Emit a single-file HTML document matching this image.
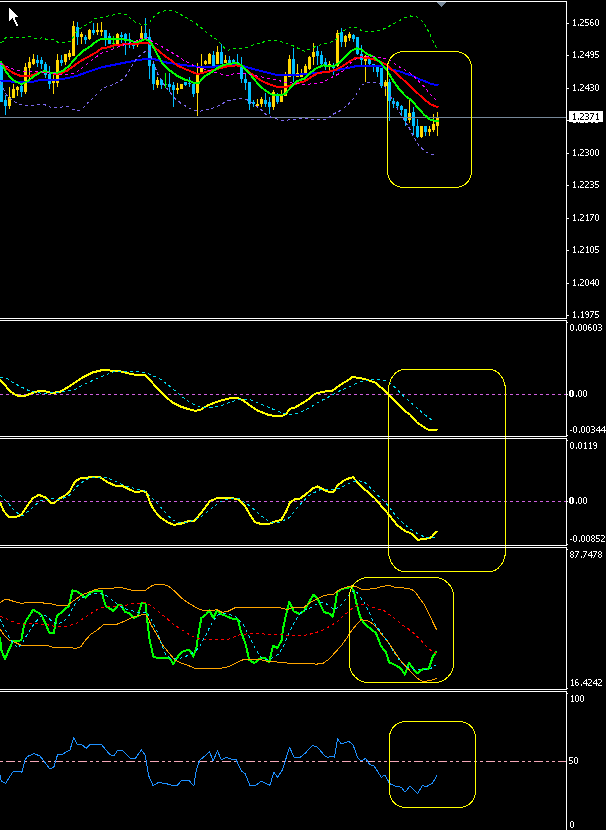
<!DOCTYPE html>
<html><head><meta charset="utf-8"><style>
html,body{margin:0;padding:0;background:#000;width:608px;height:830px;overflow:hidden}
svg{display:block}
path,line,polygon{shape-rendering:crispEdges}
text{font-family:"Liberation Sans",sans-serif;font-size:10px}
</style></head><body>
<svg width="608" height="830" viewBox="0 0 608 830">
<path d="M0 394.5H566" stroke="#d060e0" stroke-dasharray="3 3"/>
<path d="M0 501.5H566" stroke="#d060e0" stroke-dasharray="3 3"/>
<path d="M-18 761.5H566" stroke="#f5a8b8" stroke-dasharray="9 3 3 3 3 3"/>
<path fill="#ffd700" d="M8 97h3v9h-3zM9 87h1v22h-1zM12 89h3v9h-3zM13 84h1v14h-1zM16 87h3v3h-3zM17 86h1v10h-1zM24 67h3v25h-3zM25 63h1v31h-1zM28 62h3v6h-3zM29 57h1v22h-1zM32 59h3v5h-3zM33 54h1v11h-1zM52 80h3v3h-3zM53 75h1v19h-1zM56 60h3v23h-3zM57 54h1v33h-1zM64 54h3v8h-3zM65 54h1v11h-1zM68 53h3v4h-3zM69 50h1v10h-1zM72 26h3v30h-3zM73 21h1v35h-1zM80 34h3v3h-3zM81 32h1v12h-1zM88 30h3v9h-3zM89 29h1v11h-1zM96 30h3v2h-3zM97 23h1v12h-1zM100 30h3v2h-3zM101 22h1v14h-1zM116 34h3v11h-3zM117 33h1v13h-1zM136 41h3v2h-3zM137 40h1v7h-1zM140 33h3v6h-3zM141 26h1v13h-1zM156 80h3v5h-3zM157 77h1v11h-1zM176 88h3v2h-3zM177 83h1v11h-1zM180 84h3v5h-3zM181 84h1v5h-1zM196 74h3v19h-3zM197 63h1v53h-1zM200 68h3v4h-3zM201 54h1v20h-1zM204 61h3v3h-3zM205 60h1v5h-1zM208 54h3v10h-3zM209 53h1v11h-1zM216 52h3v12h-3zM217 46h1v18h-1zM224 60h3v3h-3zM225 55h1v8h-1zM256 104h3v2h-3zM257 99h1v8h-1zM260 99h3v5h-3zM261 97h1v10h-1zM272 92h3v15h-3zM273 90h1v20h-1zM280 94h3v8h-3zM281 90h1v12h-1zM284 76h3v20h-3zM285 72h1v24h-1zM288 59h3v18h-3zM289 55h1v22h-1zM296 73h3v4h-3zM297 64h1v13h-1zM300 73h3v4h-3zM301 69h1v8h-1zM304 66h3v7h-3zM305 64h1v9h-1zM308 57h3v12h-3zM309 56h1v14h-1zM312 52h3v5h-3zM313 43h1v22h-1zM328 64h3v2h-3zM329 61h1v10h-1zM336 33h3v33h-3zM337 30h1v37h-1zM344 36h3v6h-3zM345 35h1v12h-1zM348 34h3v4h-3zM349 32h1v9h-1zM364 56h3v5h-3zM365 55h1v27h-1zM384 82h3v4h-3zM385 80h1v16h-1zM408 113h3v7h-3zM409 100h1v23h-1zM420 126h3v11h-3zM421 126h1v12h-1zM428 129h3v3h-3zM429 126h1v10h-1zM432 124h3v6h-3zM433 114h1v18h-1zM436 117h3v9h-3zM437 112h1v24h-1z"/>
<path fill="#00bfff" d="M0 64h3v38h-3zM1 64h1v38h-1zM4 100h3v6h-3zM5 95h1v20h-1zM20 86h3v6h-3zM21 84h1v13h-1zM36 60h3v3h-3zM37 55h1v12h-1zM40 60h3v4h-3zM41 57h1v12h-1zM44 64h3v11h-3zM45 62h1v16h-1zM48 74h3v10h-3zM49 66h1v23h-1zM60 60h3v3h-3zM61 55h1v11h-1zM76 27h3v10h-3zM77 22h1v23h-1zM84 37h3v3h-3zM85 35h1v9h-1zM92 30h3v3h-3zM93 23h1v12h-1zM104 30h3v8h-3zM105 30h1v16h-1zM108 36h3v8h-3zM109 33h1v11h-1zM120 35h3v2h-3zM121 32h1v11h-1zM124 34h3v5h-3zM125 33h1v22h-1zM128 39h3v2h-3zM129 33h1v15h-1zM132 44h3v2h-3zM133 42h1v7h-1zM144 33h3v6h-3zM145 18h1v21h-1zM148 37h3v29h-3zM149 29h1v50h-1zM152 64h3v20h-3zM153 62h1v28h-1zM160 80h3v5h-3zM161 79h1v10h-1zM168 84h3v3h-3zM169 73h1v19h-1zM172 85h3v5h-3zM173 82h1v25h-1zM184 82h3v3h-3zM185 82h1v4h-1zM188 83h3v1h-3zM189 77h1v10h-1zM192 84h3v10h-3zM193 84h1v13h-1zM212 55h3v11h-3zM213 51h1v15h-1zM220 52h3v12h-3zM221 44h1v20h-1zM228 60h3v3h-3zM229 56h1v7h-1zM232 60h3v2h-3zM233 59h1v4h-1zM236 62h3v1h-3zM237 54h1v9h-1zM240 65h3v14h-3zM241 57h1v26h-1zM244 79h3v4h-3zM245 74h1v16h-1zM248 82h3v22h-3zM249 82h1v28h-1zM252 102h3v2h-3zM253 100h1v7h-1zM264 100h3v4h-3zM265 93h1v14h-1zM268 102h3v5h-3zM269 97h1v17h-1zM276 94h3v8h-3zM277 93h1v11h-1zM292 59h3v15h-3zM293 48h1v34h-1zM316 51h3v5h-3zM317 46h1v19h-1zM320 55h3v9h-3zM321 51h1v14h-1zM324 62h3v4h-3zM325 58h1v12h-1zM332 66h3v2h-3zM333 63h1v12h-1zM340 32h3v10h-3zM341 28h1v19h-1zM352 35h3v4h-3zM353 34h1v8h-1zM356 37h3v17h-3zM357 37h1v18h-1zM360 54h3v6h-3zM361 45h1v20h-1zM368 58h3v6h-3zM369 58h1v7h-1zM372 64h3v3h-3zM373 64h1v8h-1zM376 67h3v5h-3zM377 66h1v11h-1zM380 68h3v18h-3zM381 68h1v20h-1zM388 82h3v19h-3zM389 79h1v42h-1zM392 101h3v3h-3zM393 98h1v10h-1zM396 102h3v4h-3zM397 101h1v7h-1zM400 106h3v4h-3zM401 105h1v11h-1zM404 109h3v12h-3zM405 109h1v17h-1zM412 112h3v14h-3zM413 107h1v28h-1zM416 126h3v11h-3zM417 119h1v19h-1zM424 126h3v6h-3zM425 126h1v10h-1z"/>
<path fill="#00ff00" d="M112 43h3v1h-3zM113 36h1v13h-1zM164 84h3v1h-3zM165 73h1v15h-1z"/>
<rect x="0" y="117" width="566" height="1" fill="#778899"/>
<path d="M0.5 80.5 L10.5 81.5 L20.5 82.3 L30.5 82.3 L40.5 80.0 L53.0 79.5 L59.3 79.5 L68.0 77.9 L76.5 76.0 L89.0 71.5 L101.5 67.3 L114.0 64.8 L126.5 62.3 L139.0 60.0 L147.8 58.5 L152.5 59.1 L157.5 59.8 L165.0 62.3 L177.5 64.1 L190.0 66.0 L202.5 67.0 L215.0 66.5 L220.0 66.0 L228.5 64.5 L241.0 65.4 L253.5 69.1 L266.0 72.3 L278.5 75.4 L291.0 75.4 L304.5 74.1 L317.0 72.9 L329.5 71.5 L342.0 69.1 L354.5 66.5 L367.0 65.8 L380.5 66.0 L386.8 68.6 L393.0 69.9 L399.3 71.1 L405.5 73.6 L411.8 75.5 L418.0 78.6 L424.3 81.1 L430.5 83.6 L438.5 85.5" fill="none" stroke="#0000ff" stroke-width="2" stroke-linejoin="round"/>
<path d="M0.5 62.9 L5.5 67.9 L13.0 72.9 L20.5 76.0 L30.5 76.0 L38.0 72.9 L44.3 71.5 L53.0 73.5 L60.5 73.5 L66.5 71.0 L73.0 66.5 L76.5 63.8 L82.8 59.8 L89.0 56.5 L95.3 52.9 L101.5 48.5 L107.8 47.3 L114.0 45.4 L126.5 44.1 L139.0 43.5 L147.8 42.9 L151.5 44.8 L158.8 51.0 L165.0 56.0 L171.3 60.4 L177.5 65.4 L183.8 68.5 L190.0 71.0 L197.5 74.1 L202.5 72.9 L208.8 71.0 L215.0 69.8 L221.3 67.9 L228.5 66.0 L236.0 65.4 L242.3 66.5 L251.0 73.5 L259.8 79.8 L268.5 84.1 L276.0 86.5 L284.8 87.3 L291.0 85.4 L298.5 82.9 L304.5 81.3 L310.8 77.3 L317.0 73.5 L323.3 72.3 L329.5 71.5 L335.8 69.8 L342.0 66.5 L348.3 62.3 L354.5 58.5 L360.8 57.3 L367.0 57.9 L373.3 59.1 L380.5 61.7 L386.8 64.9 L393.0 70.5 L399.3 76.1 L405.5 81.8 L411.8 87.4 L418.0 93.6 L424.3 99.3 L430.5 104.3 L438.5 107.5" fill="none" stroke="#ff0000" stroke-width="2" stroke-linejoin="round"/>
<path d="M0.5 61.5 L5.5 71.0 L10.5 77.9 L15.5 81.5 L21.5 84.1 L28.0 81.0 L34.3 76.0 L40.5 72.3 L44.3 71.0 L50.5 72.9 L56.5 72.9 L63.0 71.0 L69.3 65.5 L76.5 57.0 L82.8 51.0 L89.0 47.3 L95.3 42.3 L101.5 38.5 L114.0 38.5 L126.5 39.8 L132.5 41.5 L139.0 41.5 L145.3 39.1 L150.3 41.5 L152.5 45.5 L157.5 54.8 L162.5 63.5 L168.8 69.8 L177.5 76.0 L185.0 79.8 L190.0 81.0 L195.0 83.5 L198.8 82.9 L205.0 76.0 L211.3 72.3 L217.5 67.9 L223.8 64.8 L228.5 64.1 L234.8 62.9 L241.0 64.8 L247.3 71.0 L253.5 78.5 L259.8 86.0 L266.0 91.0 L272.3 94.8 L278.5 95.4 L284.8 94.1 L291.0 87.3 L297.3 81.0 L304.5 78.5 L310.8 72.3 L317.0 67.9 L323.3 65.4 L329.5 66.0 L334.5 66.0 L339.5 62.3 L345.8 56.0 L352.0 50.4 L357.0 48.3 L362.0 49.8 L367.0 54.1 L373.3 56.6 L380.5 62.5 L386.8 69.9 L393.0 80.5 L399.3 89.3 L405.5 96.1 L411.8 100.5 L418.0 108.0 L424.3 114.9 L430.5 119.9 L436.8 121.1 L438.5 121.1" fill="none" stroke="#00ff00" stroke-width="2" stroke-linejoin="round"/>
<path d="M0.5 42.5 L3.0 41.5 L5.5 37.9 L25.5 37.9 L29.3 36.5 L33.0 37.9 L38.0 39.1 L43.0 37.3 L45.5 39.1 L53.0 39.5 L58.0 42.3 L63.0 42.3 L70.5 41.5 L74.3 35.5 L76.5 31.5 L82.8 26.5 L89.0 23.5 L95.3 18.5 L101.5 17.3 L107.8 16.0 L114.0 14.8 L120.3 13.3 L126.5 14.8 L131.5 19.1 L136.5 22.9 L142.8 24.8 L149.0 23.5 L152.5 17.9 L158.8 12.9 L165.0 10.8 L171.3 10.8 L177.5 12.3 L183.8 16.5 L190.0 19.8 L195.0 22.9 L201.3 27.9 L207.5 33.5 L213.8 37.3 L218.8 41.5 L223.8 47.3 L227.5 50.5 L234.8 48.5 L241.0 48.5 L247.3 47.3 L253.5 44.8 L259.8 43.5 L266.0 41.0 L272.3 40.8 L278.5 41.0 L284.8 42.9 L291.0 44.8 L297.3 47.9 L302.3 49.8 L304.5 51.5 L310.8 48.5 L317.0 46.0 L323.3 44.1 L329.5 42.9 L335.8 39.8 L339.5 33.5 L344.5 30.4 L350.8 27.3 L357.0 27.3 L362.0 31.0 L369.5 31.0 L373.8 31.8 L381.0 30.0 L386.9 27.6 L392.9 24.1 L398.8 21.0 L404.7 17.7 L410.6 16.0 L416.5 16.5 L419.5 18.5 L423.0 22.0 L426.5 27.5 L429.5 33.5 L432.5 40.0 L435.5 46.0 L437.0 48.5" fill="none" stroke="#00f000" stroke-width="1" stroke-linejoin="round" stroke-dasharray="3 3"/>
<path d="M0.5 82.5 L4.3 91.0 L6.8 95.5 L13.0 101.0 L19.3 104.5 L25.5 105.5 L33.0 105.5 L38.0 104.1 L44.3 104.5 L50.5 107.3 L59.3 107.3 L68.0 106.5 L73.0 109.5 L79.0 111.0 L84.0 107.3 L89.0 101.5 L95.3 96.0 L100.3 90.5 L106.5 86.5 L112.8 84.8 L117.8 82.3 L124.0 78.5 L127.8 72.9 L131.5 66.5 L135.3 60.4 L140.3 55.4 L145.9 51.0 L148.5 50.5 L150.5 54.5 L154.5 65.5 L157.5 73.5 L162.5 82.3 L168.8 91.0 L175.0 98.5 L181.3 103.5 L187.5 107.3 L193.8 110.4 L198.8 111.5 L205.0 109.8 L211.3 108.5 L217.5 106.5 L222.5 103.5 L228.5 100.4 L234.8 99.8 L241.0 98.5 L247.3 99.8 L253.5 104.1 L259.8 108.5 L264.8 113.5 L271.0 117.3 L277.3 119.1 L282.3 120.4 L288.5 120.0 L294.8 119.1 L301.0 118.5 L304.5 117.9 L314.5 119.8 L325.8 119.1 L333.3 114.1 L342.0 109.8 L348.3 104.1 L354.5 97.3 L358.3 91.0 L362.0 84.8 L367.0 82.5 L373.3 82.5 L378.3 82.3 L384.5 86.5 L390.5 96.5 L396.8 108.0 L403.0 118.0 L409.3 128.0 L414.3 138.0 L419.0 145.5 L424.8 151.3 L430.5 154.5 L437.3 155.1" fill="none" stroke="#7b68ee" stroke-width="1" stroke-linejoin="round" stroke-dasharray="3 3"/>
<path d="M0.5 63.5 L6.8 66.5 L13.0 69.1 L21.5 71.5 L38.0 71.5 L44.3 72.3 L53.0 73.5 L63.0 74.5 L70.5 74.1 L76.5 72.3 L82.8 67.3 L89.0 62.3 L95.3 57.9 L100.3 53.5 L107.8 51.0 L114.0 48.5 L124.0 44.8 L132.8 42.3 L141.5 38.5 L147.8 37.9 L151.5 41.0 L158.8 44.8 L165.0 48.5 L171.3 52.3 L177.5 56.0 L183.8 60.4 L190.0 63.5 L196.3 67.3 L202.5 68.5 L208.8 70.4 L215.0 72.3 L220.0 73.5 L226.3 76.0 L234.8 73.5 L241.0 73.5 L247.3 74.1 L253.5 75.4 L259.8 76.5 L266.0 77.9 L272.3 79.1 L278.5 80.4 L284.8 82.3 L291.0 82.9 L297.3 83.5 L303.5 84.8 L314.5 83.5 L323.3 82.3 L332.0 77.3 L339.5 73.5 L344.5 69.8 L350.8 62.9 L357.0 58.5 L363.3 56.6 L369.5 56.6 L377.0 56.6 L380.5 58.0 L388.0 58.6 L393.0 63.0 L399.3 66.8 L405.5 70.5 L411.8 74.3 L418.0 80.5 L424.3 86.8 L429.3 93.0 L434.3 98.6 L437.5 101.5" fill="none" stroke="#ff00ff" stroke-width="1" stroke-linejoin="round" stroke-dasharray="3 3"/>
<path d="M0.0 380.0 L5.0 385.0 L10.0 391.3 L15.0 394.5 L20.0 396.5 L25.0 396.0 L30.0 393.8 L37.5 391.3 L45.0 391.3 L52.5 393.0 L60.0 391.8 L67.5 387.5 L75.0 382.5 L82.5 377.5 L92.5 372.5 L102.5 370.0 L110.0 370.5 L120.0 371.3 L130.0 373.8 L137.5 375.0 L145.0 375.0 L150.0 380.0 L157.5 388.8 L165.0 396.3 L172.5 402.5 L180.0 406.3 L187.5 408.8 L195.0 410.8 L200.0 410.0 L207.5 405.5 L215.0 402.5 L222.5 400.0 L230.0 398.3 L236.3 397.5 L242.5 400.0 L250.0 405.5 L257.5 410.5 L267.5 414.5 L275.0 416.3 L281.3 416.3 L286.3 413.8 L290.0 408.8 L295.0 407.5 L300.0 404.5 L307.5 400.0 L315.0 393.8 L322.5 391.8 L332.5 390.5 L340.0 385.0 L347.5 380.5 L352.5 377.0 L360.0 378.0 L367.5 380.0 L375.0 382.5 L382.5 388.8 L390.0 396.3 L397.5 403.8 L405.0 411.3 L410.0 414.5 L417.5 423.0 L427.5 429.5 L437.5 430.0" fill="none" stroke="#ffff00" stroke-width="2" stroke-linejoin="round"/>
<path d="M0.0 377.0 L7.5 378.8 L12.5 382.5 L20.0 386.3 L30.0 391.3 L40.0 393.0 L50.0 393.0 L65.0 391.3 L75.0 389.5 L85.0 383.8 L95.0 379.5 L105.0 375.0 L115.0 371.3 L130.0 371.3 L145.0 372.5 L150.0 374.5 L160.0 378.8 L170.0 386.3 L180.0 395.0 L190.0 402.5 L200.0 407.0 L210.0 407.5 L220.0 406.3 L230.0 402.0 L240.0 399.5 L250.0 399.5 L260.0 403.8 L270.0 408.0 L280.0 412.0 L287.5 414.5 L295.0 413.8 L300.0 412.5 L310.0 407.5 L320.0 401.3 L330.0 396.3 L340.0 390.8 L350.0 386.3 L360.0 382.0 L370.0 379.5 L380.0 379.5 L387.5 381.3 L395.0 387.5 L405.0 397.5 L415.0 406.3 L425.0 415.0 L433.8 421.3" fill="none" stroke="#00dcf0" stroke-width="1" stroke-linejoin="round" stroke-dasharray="3 3"/>
<path d="M0.0 502.3 L3.8 511.0 L8.8 517.3 L15.0 517.3 L21.3 514.8 L26.3 507.3 L32.5 498.5 L38.8 494.8 L45.0 497.3 L50.0 502.3 L53.8 503.5 L58.8 499.0 L65.0 495.5 L70.0 491.0 L75.0 481.5 L80.0 478.5 L90.0 477.3 L100.0 477.3 L107.5 482.3 L115.0 485.5 L122.5 486.0 L130.0 489.8 L136.3 492.3 L142.5 491.0 L146.3 492.3 L150.0 502.3 L153.8 509.8 L160.0 517.3 L167.5 522.3 L173.8 524.8 L180.0 524.0 L187.5 521.5 L195.0 520.5 L202.5 511.0 L210.0 501.0 L217.5 498.0 L225.0 497.8 L232.5 498.0 L238.8 499.8 L245.0 506.0 L250.0 514.8 L255.0 522.3 L261.3 524.0 L267.5 524.5 L275.0 521.5 L281.3 519.8 L286.3 511.0 L290.0 502.3 L295.0 499.3 L300.0 498.5 L306.3 494.0 L312.5 488.5 L317.5 486.5 L322.5 489.0 L327.5 491.5 L333.8 491.8 L337.5 485.5 L343.8 480.5 L350.0 477.8 L353.0 477.3 L358.8 483.5 L362.5 488.0 L367.5 491.5 L375.0 498.5 L382.5 507.3 L390.0 516.0 L397.5 525.5 L405.0 531.0 L411.3 533.5 L417.5 539.8 L425.0 539.0 L431.3 537.3 L437.0 531.0" fill="none" stroke="#ffff00" stroke-width="2" stroke-linejoin="round"/>
<path d="M0.0 494.8 L7.5 502.3 L15.0 511.5 L22.5 516.0 L30.0 509.8 L40.0 501.0 L50.0 498.5 L60.0 499.8 L70.0 494.8 L77.5 486.0 L85.0 479.8 L95.0 477.3 L105.0 477.3 L115.0 481.0 L125.0 486.0 L135.0 488.5 L145.0 491.0 L150.0 496.0 L157.5 503.5 L165.0 512.3 L172.5 519.8 L180.0 523.0 L190.0 521.5 L200.0 517.3 L210.0 509.8 L220.0 501.5 L230.0 498.5 L240.0 499.0 L250.0 506.0 L260.0 514.8 L270.0 522.3 L280.0 522.3 L290.0 517.3 L297.5 507.3 L302.0 502.3 L310.0 494.8 L320.0 489.8 L330.0 489.8 L340.0 488.0 L350.0 483.0 L357.5 480.3 L365.0 482.3 L372.5 489.8 L380.0 497.3 L387.5 504.8 L395.0 514.8 L405.0 524.8 L415.0 532.3 L425.0 537.3 L436.3 537.3" fill="none" stroke="#00dcf0" stroke-width="1" stroke-linejoin="round" stroke-dasharray="3 3"/>
<path d="M0.0 637.3 L1.3 649.8 L5.0 659.0 L8.8 649.8 L13.1 641.0 L21.3 640.4 L23.8 626.0 L26.3 620.4 L33.1 609.8 L37.5 612.3 L41.3 614.8 L45.0 622.3 L49.4 632.9 L53.8 632.9 L56.9 616.0 L60.0 613.5 L68.8 606.0 L72.5 590.4 L76.0 591.0 L81.0 594.1 L85.4 597.9 L89.8 592.9 L94.8 590.8 L101.6 590.8 L104.1 601.0 L106.0 606.0 L113.5 611.0 L118.5 604.8 L121.0 604.8 L124.8 611.6 L129.8 613.5 L133.5 617.9 L137.9 616.0 L141.6 602.9 L145.4 602.9 L147.9 626.0 L149.8 641.0 L152.0 650.0 L153.3 656.6 L159.5 658.5 L164.5 657.9 L169.5 657.9 L173.3 664.1 L178.3 656.0 L182.6 651.6 L188.3 649.8 L190.1 651.0 L193.3 656.6 L196.4 647.9 L198.9 631.0 L201.4 617.9 L205.8 614.8 L209.5 610.4 L213.3 617.9 L217.0 610.4 L220.8 614.1 L224.5 615.4 L228.0 616.9 L233.0 618.8 L238.0 619.4 L240.5 630.0 L245.5 643.8 L249.3 660.0 L254.3 663.1 L260.5 658.1 L265.5 658.1 L269.3 661.9 L273.0 645.6 L277.4 648.1 L281.8 640.0 L283.0 628.8 L286.8 611.3 L289.3 601.9 L291.8 606.9 L293.6 611.3 L299.3 613.8 L304.0 611.0 L309.0 602.3 L313.4 594.8 L317.8 599.1 L324.0 612.3 L328.4 612.9 L332.8 616.6 L335.3 604.8 L337.1 592.3 L341.5 589.1 L346.5 587.9 L350.9 587.0 L354.0 591.0 L356.5 603.5 L360.3 617.3 L364.0 623.5 L370.3 628.5 L376.0 633.0 L381.0 646.0 L386.0 652.3 L389.1 662.3 L396.0 665.4 L401.0 668.5 L405.0 674.6 L409.0 662.8 L413.5 669.1 L417.0 673.6 L421.0 669.7 L428.8 668.7 L432.8 656.8 L436.7 651.3" fill="none" stroke="#00ff00" stroke-width="2" stroke-linejoin="round"/>
<path d="M0.0 602.9 L5.0 599.1 L8.8 599.8 L12.5 601.0 L21.3 603.5 L27.5 602.3 L36.3 602.9 L40.0 602.3 L45.0 603.3 L52.5 604.1 L57.5 605.4 L67.5 605.4 L72.5 601.6 L76.0 599.1 L81.0 595.4 L88.5 592.3 L94.8 589.8 L99.8 588.5 L108.5 588.5 L119.8 587.5 L124.8 588.3 L132.3 590.4 L145.4 590.4 L148.5 587.9 L152.0 585.6 L155.8 584.5 L163.3 584.5 L168.3 586.0 L174.5 591.0 L182.0 598.5 L188.3 602.9 L194.5 606.6 L200.8 609.8 L207.0 611.0 L217.0 609.8 L222.0 612.3 L228.0 611.3 L235.5 607.5 L253.0 607.3 L279.3 607.3 L283.0 608.8 L288.0 609.4 L293.0 607.3 L304.0 607.3 L310.3 602.3 L316.5 599.1 L322.8 596.0 L329.0 594.5 L334.0 594.1 L339.0 589.8 L345.3 587.5 L351.5 586.0 L356.5 586.6 L361.5 589.1 L369.0 589.1 L375.3 588.5 L381.0 586.6 L388.5 585.4 L396.0 587.5 L403.5 587.9 L411.0 589.1 L414.8 591.6 L419.8 598.5 L424.8 605.4 L428.5 612.9 L432.3 621.0 L436.6 629.8" fill="none" stroke="#ffa500" stroke-width="1" stroke-linejoin="round"/>
<path d="M0.0 629.1 L3.8 634.8 L8.8 639.8 L15.0 642.3 L22.5 646.0 L28.8 645.4 L47.5 645.4 L52.5 647.3 L72.5 647.9 L76.0 648.3 L81.0 646.6 L84.8 641.0 L91.0 634.1 L96.0 631.0 L103.5 624.8 L117.3 624.1 L123.5 621.6 L131.0 617.9 L138.5 615.4 L145.4 614.1 L147.9 617.9 L151.0 624.8 L157.0 634.8 L163.3 646.0 L169.5 653.5 L174.5 659.8 L180.8 662.9 L188.3 665.4 L194.5 668.3 L222.0 668.0 L228.0 666.9 L234.3 663.8 L240.5 660.6 L245.5 659.1 L261.8 660.0 L268.0 661.5 L275.5 661.9 L288.0 663.1 L304.0 663.2 L316.5 664.1 L322.8 663.5 L329.0 659.1 L335.3 652.3 L341.5 645.4 L346.5 638.5 L350.3 632.3 L355.3 626.0 L360.9 619.8 L366.5 620.4 L371.5 622.9 L376.5 627.3 L381.0 633.5 L387.3 641.0 L392.3 648.5 L397.3 656.0 L402.3 662.9 L408.5 669.1 L413.5 674.8 L418.5 679.1 L422.9 681.5 L430.8 680.5 L436.7 678.2" fill="none" stroke="#ffa500" stroke-width="1" stroke-linejoin="round"/>
<path d="M0.0 616.6 L5.0 617.9 L11.3 621.0 L17.5 623.5 L25.0 624.1 L35.0 623.5 L47.5 624.8 L56.3 626.6 L65.0 626.6 L71.9 624.8 L76.0 623.5 L82.3 619.1 L88.5 614.8 L94.8 611.0 L101.0 607.5 L107.3 606.3 L113.5 606.3 L119.8 605.4 L126.0 605.4 L132.3 603.5 L138.5 603.3 L144.1 602.3 L149.8 604.8 L154.5 608.5 L160.8 613.5 L167.0 618.5 L173.3 624.1 L179.5 628.5 L185.8 632.3 L192.0 636.0 L197.0 638.5 L204.5 639.5 L214.5 639.5 L227.0 639.6 L234.3 636.9 L240.5 634.4 L253.0 633.5 L263.0 633.5 L265.5 634.8 L278.0 634.8 L290.5 635.3 L304.0 635.4 L311.5 633.8 L317.8 631.9 L324.0 629.5 L330.3 626.0 L336.5 622.3 L341.5 617.3 L347.8 612.3 L354.0 606.6 L360.3 604.5 L366.5 604.5 L372.8 607.3 L376.0 608.5 L383.5 610.4 L389.8 614.8 L396.0 619.8 L402.3 624.8 L408.5 629.1 L414.8 634.1 L419.8 639.1 L424.8 644.8 L431.0 650.4 L436.0 653.3" fill="none" stroke="#ff0000" stroke-width="1" stroke-linejoin="round" stroke-dasharray="3 3"/>
<path d="M0.0 619.0 L2.5 624.0 L5.6 629.8 L8.8 636.6 L12.5 642.3 L17.5 647.9 L21.9 644.0 L25.0 637.9 L28.8 632.3 L32.5 626.0 L37.5 619.8 L41.9 614.8 L47.5 616.6 L52.5 622.3 L58.1 624.1 L64.4 621.0 L68.8 616.0 L71.9 609.1 L76.0 602.3 L81.0 598.5 L87.3 595.4 L93.5 594.1 L99.8 593.5 L105.4 594.8 L111.0 599.1 L117.3 604.1 L123.5 608.5 L129.8 609.8 L136.0 612.3 L141.0 612.3 L146.6 612.3 L151.0 618.5 L153.3 623.5 L157.0 631.0 L162.0 646.0 L165.8 654.8 L170.8 658.5 L177.0 659.1 L183.3 657.3 L189.5 654.8 L195.8 651.0 L199.5 646.6 L203.3 639.8 L207.0 633.5 L209.5 627.3 L213.3 621.0 L217.0 615.4 L222.0 613.3 L228.0 614.4 L234.3 615.6 L239.3 620.0 L244.3 626.3 L248.0 633.8 L251.8 641.3 L255.5 648.8 L260.5 656.9 L265.5 660.0 L271.8 658.1 L278.0 654.4 L283.0 647.5 L285.5 641.3 L288.0 635.0 L291.8 627.5 L296.1 619.4 L300.5 613.1 L304.0 610.4 L311.5 607.3 L317.8 603.5 L323.4 602.3 L329.0 605.4 L334.0 609.8 L340.3 606.0 L345.9 599.1 L350.3 592.9 L355.3 590.4 L359.6 596.0 L364.0 602.3 L367.1 608.5 L370.3 614.8 L372.8 620.4 L376.0 626.0 L382.3 633.5 L388.5 643.5 L394.8 653.5 L401.0 662.3 L407.3 667.3 L413.5 669.1 L419.8 670.0 L429.8 669.1 L436.0 664.8" fill="none" stroke="#00e5ff" stroke-width="1" stroke-linejoin="round" stroke-dasharray="3 3"/>
<path d="M0.0 774.8 L1.3 781.0 L5.5 783.5 L12.5 772.3 L13.8 771.0 L20.0 771.0 L22.0 772.3 L25.0 759.8 L27.5 756.5 L33.8 753.5 L40.0 756.0 L43.8 761.0 L50.0 769.0 L53.8 767.3 L57.5 754.8 L61.3 754.8 L70.0 749.8 L73.8 737.3 L77.5 744.8 L81.3 744.3 L86.3 748.5 L90.0 744.3 L95.0 744.8 L101.3 744.3 L110.0 754.8 L113.8 756.0 L117.5 750.5 L122.5 750.5 L130.0 758.0 L135.0 759.0 L141.3 749.8 L145.0 754.8 L148.8 776.0 L153.0 785.5 L158.8 782.3 L167.5 784.0 L173.8 786.0 L177.5 785.3 L181.3 780.5 L188.8 780.3 L193.8 786.0 L196.3 769.8 L200.0 759.8 L205.0 756.0 L209.5 751.5 L213.0 761.0 L217.5 751.0 L221.3 759.8 L226.3 757.3 L231.3 759.0 L236.3 759.8 L241.3 771.0 L245.0 773.5 L250.0 785.5 L255.0 786.0 L261.3 781.0 L270.0 785.3 L273.8 772.3 L277.5 777.3 L282.5 769.8 L289.5 747.3 L294.5 758.0 L300.0 757.3 L305.0 753.5 L312.5 745.3 L317.5 747.3 L325.0 756.0 L327.5 757.3 L332.5 756.5 L334.5 757.3 L337.5 738.5 L341.3 744.0 L348.8 741.5 L353.0 744.8 L357.5 757.3 L361.3 761.0 L365.5 758.5 L370.0 764.8 L373.8 765.5 L381.3 777.3 L385.0 774.8 L389.5 783.5 L395.0 786.0 L401.3 787.3 L405.0 792.3 L410.0 786.0 L417.5 793.5 L422.5 785.5 L426.3 786.8 L432.5 783.0 L437.0 775.5" fill="none" stroke="#1e90ff" stroke-width="1" stroke-linejoin="round"/>
<rect x="387.5" y="51.5" width="84" height="136" rx="16" ry="16" fill="none" stroke="#ffff00" stroke-width="1" style="shape-rendering:crispEdges"/>
<rect x="388.5" y="369.5" width="117" height="202" rx="16" ry="21" fill="none" stroke="#ffff00" stroke-width="1" style="shape-rendering:crispEdges"/>
<rect x="349.5" y="577.5" width="104" height="105" rx="19" ry="19" fill="none" stroke="#ffff00" stroke-width="1" style="shape-rendering:crispEdges"/>
<rect x="389.5" y="721.5" width="86" height="86" rx="16" ry="16" fill="none" stroke="#ffff00" stroke-width="1" style="shape-rendering:crispEdges"/>
<rect x="0" y="0" width="606" height="1" fill="#000"/>
<rect x="0" y="1" width="567" height="1" fill="#fff"/>
<rect x="0" y="318" width="567" height="1" fill="#fff"/>
<rect x="566" y="1" width="1" height="317" fill="#fff"/>
<rect x="0" y="320" width="567" height="1" fill="#fff"/>
<rect x="0" y="436" width="567" height="1" fill="#fff"/>
<rect x="566" y="320" width="1" height="116" fill="#fff"/>
<rect x="0" y="438" width="567" height="1" fill="#fff"/>
<rect x="0" y="545" width="567" height="1" fill="#fff"/>
<rect x="566" y="438" width="1" height="107" fill="#fff"/>
<rect x="0" y="547" width="567" height="1" fill="#fff"/>
<rect x="0" y="689" width="567" height="1" fill="#fff"/>
<rect x="566" y="547" width="1" height="142" fill="#fff"/>
<rect x="0" y="691" width="567" height="1" fill="#fff"/>
<rect x="566" y="691" width="1" height="139" fill="#fff"/>
<rect x="567" y="0" width="39" height="830" fill="#000"/>
<rect x="606" y="0" width="2" height="830" fill="#fff"/>
<polygon points="437,2 446,2 441.5,7" fill="#778899"/>
<path fill="#fff" d="M574 19h1v1h-1zM580 19h3v1h-3zM585 19h4v1h-4zM591 19h2v1h-2zM596 19h2v1h-2zM573 20h2v1h-2zM583 20h1v1h-1zM585 20h1v1h-1zM590 20h1v1h-1zM595 20h1v1h-1zM598 20h1v1h-1zM574 21h1v1h-1zM583 21h1v1h-1zM585 21h1v1h-1zM590 21h1v1h-1zM595 21h1v1h-1zM598 21h1v1h-1zM574 22h1v1h-1zM582 22h1v1h-1zM585 22h3v1h-3zM590 22h3v1h-3zM595 22h1v1h-1zM598 22h1v1h-1zM567 23h2v1h-2zM574 23h1v1h-1zM581 23h1v1h-1zM588 23h1v1h-1zM590 23h1v1h-1zM593 23h1v1h-1zM595 23h1v1h-1zM598 23h1v1h-1zM574 24h1v1h-1zM578 24h1v1h-1zM580 24h1v1h-1zM588 24h1v1h-1zM590 24h1v1h-1zM593 24h1v1h-1zM595 24h1v1h-1zM598 24h1v1h-1zM573 25h3v1h-3zM578 25h1v1h-1zM580 25h4v1h-4zM585 25h3v1h-3zM591 25h2v1h-2zM596 25h2v1h-2zM574 51h1v1h-1zM580 51h3v1h-3zM588 51h1v1h-1zM591 51h2v1h-2zM595 51h4v1h-4zM573 52h2v1h-2zM583 52h1v1h-1zM587 52h2v1h-2zM590 52h1v1h-1zM593 52h1v1h-1zM595 52h1v1h-1zM574 53h1v1h-1zM583 53h1v1h-1zM586 53h1v1h-1zM588 53h1v1h-1zM590 53h1v1h-1zM593 53h1v1h-1zM595 53h1v1h-1zM574 54h1v1h-1zM582 54h1v1h-1zM585 54h1v1h-1zM588 54h1v1h-1zM591 54h3v1h-3zM595 54h3v1h-3zM567 55h2v1h-2zM574 55h1v1h-1zM581 55h1v1h-1zM585 55h5v1h-5zM593 55h1v1h-1zM598 55h1v1h-1zM574 56h1v1h-1zM578 56h1v1h-1zM580 56h1v1h-1zM588 56h1v1h-1zM593 56h1v1h-1zM598 56h1v1h-1zM573 57h3v1h-3zM578 57h1v1h-1zM580 57h4v1h-4zM588 57h1v1h-1zM591 57h2v1h-2zM595 57h3v1h-3zM574 84h1v1h-1zM580 84h3v1h-3zM588 84h1v1h-1zM590 84h3v1h-3zM596 84h2v1h-2zM573 85h2v1h-2zM583 85h1v1h-1zM587 85h2v1h-2zM593 85h1v1h-1zM595 85h1v1h-1zM598 85h1v1h-1zM574 86h1v1h-1zM583 86h1v1h-1zM586 86h1v1h-1zM588 86h1v1h-1zM593 86h1v1h-1zM595 86h1v1h-1zM598 86h1v1h-1zM574 87h1v1h-1zM582 87h1v1h-1zM585 87h1v1h-1zM588 87h1v1h-1zM591 87h2v1h-2zM595 87h1v1h-1zM598 87h1v1h-1zM567 88h2v1h-2zM574 88h1v1h-1zM581 88h1v1h-1zM585 88h5v1h-5zM593 88h1v1h-1zM595 88h1v1h-1zM598 88h1v1h-1zM574 89h1v1h-1zM578 89h1v1h-1zM580 89h1v1h-1zM588 89h1v1h-1zM593 89h1v1h-1zM595 89h1v1h-1zM598 89h1v1h-1zM573 90h3v1h-3zM578 90h1v1h-1zM580 90h4v1h-4zM588 90h1v1h-1zM590 90h3v1h-3zM596 90h2v1h-2zM574 116h1v1h-1zM580 116h3v1h-3zM585 116h3v1h-3zM591 116h2v1h-2zM595 116h4v1h-4zM573 117h2v1h-2zM583 117h1v1h-1zM588 117h1v1h-1zM590 117h1v1h-1zM595 117h1v1h-1zM574 118h1v1h-1zM583 118h1v1h-1zM588 118h1v1h-1zM590 118h1v1h-1zM595 118h1v1h-1zM574 119h1v1h-1zM582 119h1v1h-1zM586 119h2v1h-2zM590 119h3v1h-3zM595 119h3v1h-3zM567 120h2v1h-2zM574 120h1v1h-1zM581 120h1v1h-1zM588 120h1v1h-1zM590 120h1v1h-1zM593 120h1v1h-1zM598 120h1v1h-1zM574 121h1v1h-1zM578 121h1v1h-1zM580 121h1v1h-1zM588 121h1v1h-1zM590 121h1v1h-1zM593 121h1v1h-1zM598 121h1v1h-1zM573 122h3v1h-3zM578 122h1v1h-1zM580 122h4v1h-4zM585 122h3v1h-3zM591 122h2v1h-2zM595 122h3v1h-3zM574 149h1v1h-1zM580 149h3v1h-3zM585 149h3v1h-3zM591 149h2v1h-2zM596 149h2v1h-2zM573 150h2v1h-2zM583 150h1v1h-1zM588 150h1v1h-1zM590 150h1v1h-1zM593 150h1v1h-1zM595 150h1v1h-1zM598 150h1v1h-1zM574 151h1v1h-1zM583 151h1v1h-1zM588 151h1v1h-1zM590 151h1v1h-1zM593 151h1v1h-1zM595 151h1v1h-1zM598 151h1v1h-1zM574 152h1v1h-1zM582 152h1v1h-1zM586 152h2v1h-2zM590 152h1v1h-1zM593 152h1v1h-1zM595 152h1v1h-1zM598 152h1v1h-1zM567 153h2v1h-2zM574 153h1v1h-1zM581 153h1v1h-1zM588 153h1v1h-1zM590 153h1v1h-1zM593 153h1v1h-1zM595 153h1v1h-1zM598 153h1v1h-1zM574 154h1v1h-1zM578 154h1v1h-1zM580 154h1v1h-1zM588 154h1v1h-1zM590 154h1v1h-1zM593 154h1v1h-1zM595 154h1v1h-1zM598 154h1v1h-1zM573 155h3v1h-3zM578 155h1v1h-1zM580 155h4v1h-4zM585 155h3v1h-3zM591 155h2v1h-2zM596 155h2v1h-2zM574 181h1v1h-1zM580 181h3v1h-3zM585 181h3v1h-3zM590 181h3v1h-3zM595 181h4v1h-4zM573 182h2v1h-2zM583 182h1v1h-1zM588 182h1v1h-1zM593 182h1v1h-1zM595 182h1v1h-1zM574 183h1v1h-1zM583 183h1v1h-1zM588 183h1v1h-1zM593 183h1v1h-1zM595 183h1v1h-1zM574 184h1v1h-1zM582 184h1v1h-1zM587 184h1v1h-1zM591 184h2v1h-2zM595 184h3v1h-3zM567 185h2v1h-2zM574 185h1v1h-1zM581 185h1v1h-1zM586 185h1v1h-1zM593 185h1v1h-1zM598 185h1v1h-1zM574 186h1v1h-1zM578 186h1v1h-1zM580 186h1v1h-1zM585 186h1v1h-1zM593 186h1v1h-1zM598 186h1v1h-1zM573 187h3v1h-3zM578 187h1v1h-1zM580 187h4v1h-4zM585 187h4v1h-4zM590 187h3v1h-3zM595 187h3v1h-3zM574 214h1v1h-1zM580 214h3v1h-3zM587 214h1v1h-1zM590 214h4v1h-4zM596 214h2v1h-2zM573 215h2v1h-2zM583 215h1v1h-1zM586 215h2v1h-2zM593 215h1v1h-1zM595 215h1v1h-1zM598 215h1v1h-1zM574 216h1v1h-1zM583 216h1v1h-1zM587 216h1v1h-1zM592 216h1v1h-1zM595 216h1v1h-1zM598 216h1v1h-1zM574 217h1v1h-1zM582 217h1v1h-1zM587 217h1v1h-1zM592 217h1v1h-1zM595 217h1v1h-1zM598 217h1v1h-1zM567 218h2v1h-2zM574 218h1v1h-1zM581 218h1v1h-1zM587 218h1v1h-1zM591 218h1v1h-1zM595 218h1v1h-1zM598 218h1v1h-1zM574 219h1v1h-1zM578 219h1v1h-1zM580 219h1v1h-1zM587 219h1v1h-1zM591 219h1v1h-1zM595 219h1v1h-1zM598 219h1v1h-1zM573 220h3v1h-3zM578 220h1v1h-1zM580 220h4v1h-4zM586 220h3v1h-3zM590 220h1v1h-1zM596 220h2v1h-2zM574 246h1v1h-1zM580 246h3v1h-3zM587 246h1v1h-1zM591 246h2v1h-2zM595 246h4v1h-4zM573 247h2v1h-2zM583 247h1v1h-1zM586 247h2v1h-2zM590 247h1v1h-1zM593 247h1v1h-1zM595 247h1v1h-1zM574 248h1v1h-1zM583 248h1v1h-1zM587 248h1v1h-1zM590 248h1v1h-1zM593 248h1v1h-1zM595 248h1v1h-1zM574 249h1v1h-1zM582 249h1v1h-1zM587 249h1v1h-1zM590 249h1v1h-1zM593 249h1v1h-1zM595 249h3v1h-3zM567 250h2v1h-2zM574 250h1v1h-1zM581 250h1v1h-1zM587 250h1v1h-1zM590 250h1v1h-1zM593 250h1v1h-1zM598 250h1v1h-1zM574 251h1v1h-1zM578 251h1v1h-1zM580 251h1v1h-1zM587 251h1v1h-1zM590 251h1v1h-1zM593 251h1v1h-1zM598 251h1v1h-1zM573 252h3v1h-3zM578 252h1v1h-1zM580 252h4v1h-4zM586 252h3v1h-3zM591 252h2v1h-2zM595 252h3v1h-3zM574 279h1v1h-1zM580 279h3v1h-3zM586 279h2v1h-2zM593 279h1v1h-1zM596 279h2v1h-2zM573 280h2v1h-2zM583 280h1v1h-1zM585 280h1v1h-1zM588 280h1v1h-1zM592 280h2v1h-2zM595 280h1v1h-1zM598 280h1v1h-1zM574 281h1v1h-1zM583 281h1v1h-1zM585 281h1v1h-1zM588 281h1v1h-1zM591 281h1v1h-1zM593 281h1v1h-1zM595 281h1v1h-1zM598 281h1v1h-1zM574 282h1v1h-1zM582 282h1v1h-1zM585 282h1v1h-1zM588 282h1v1h-1zM590 282h1v1h-1zM593 282h1v1h-1zM595 282h1v1h-1zM598 282h1v1h-1zM567 283h2v1h-2zM574 283h1v1h-1zM581 283h1v1h-1zM585 283h1v1h-1zM588 283h1v1h-1zM590 283h6v1h-6zM598 283h1v1h-1zM574 284h1v1h-1zM578 284h1v1h-1zM580 284h1v1h-1zM585 284h1v1h-1zM588 284h1v1h-1zM593 284h1v1h-1zM595 284h1v1h-1zM598 284h1v1h-1zM573 285h3v1h-3zM578 285h1v1h-1zM580 285h4v1h-4zM586 285h2v1h-2zM593 285h1v1h-1zM596 285h2v1h-2zM574 311h1v1h-1zM582 311h1v1h-1zM586 311h2v1h-2zM590 311h4v1h-4zM595 311h4v1h-4zM573 312h2v1h-2zM581 312h2v1h-2zM585 312h1v1h-1zM588 312h1v1h-1zM593 312h1v1h-1zM595 312h1v1h-1zM574 313h1v1h-1zM582 313h1v1h-1zM585 313h1v1h-1zM588 313h1v1h-1zM592 313h1v1h-1zM595 313h1v1h-1zM574 314h1v1h-1zM582 314h1v1h-1zM586 314h3v1h-3zM592 314h1v1h-1zM595 314h3v1h-3zM567 315h2v1h-2zM574 315h1v1h-1zM582 315h1v1h-1zM588 315h1v1h-1zM591 315h1v1h-1zM598 315h1v1h-1zM574 316h1v1h-1zM578 316h1v1h-1zM582 316h1v1h-1zM588 316h1v1h-1zM591 316h1v1h-1zM598 316h1v1h-1zM573 317h3v1h-3zM578 317h1v1h-1zM581 317h3v1h-3zM586 317h2v1h-2zM590 317h1v1h-1zM595 317h3v1h-3zM567 322h1v1h-1zM571 324h2v1h-2zM579 324h2v1h-2zM584 324h2v1h-2zM589 324h2v1h-2zM594 324h2v1h-2zM598 324h3v1h-3zM570 325h1v1h-1zM573 325h1v1h-1zM578 325h1v1h-1zM581 325h1v1h-1zM583 325h1v1h-1zM586 325h1v1h-1zM588 325h1v1h-1zM593 325h1v1h-1zM596 325h1v1h-1zM601 325h1v1h-1zM570 326h1v1h-1zM573 326h1v1h-1zM578 326h1v1h-1zM581 326h1v1h-1zM583 326h1v1h-1zM586 326h1v1h-1zM588 326h1v1h-1zM593 326h1v1h-1zM596 326h1v1h-1zM601 326h1v1h-1zM570 327h1v1h-1zM573 327h1v1h-1zM578 327h1v1h-1zM581 327h1v1h-1zM583 327h1v1h-1zM586 327h1v1h-1zM588 327h3v1h-3zM593 327h1v1h-1zM596 327h1v1h-1zM599 327h2v1h-2zM570 328h1v1h-1zM573 328h1v1h-1zM578 328h1v1h-1zM581 328h1v1h-1zM583 328h1v1h-1zM586 328h1v1h-1zM588 328h1v1h-1zM591 328h1v1h-1zM593 328h1v1h-1zM596 328h1v1h-1zM601 328h1v1h-1zM570 329h1v1h-1zM573 329h1v1h-1zM576 329h1v1h-1zM578 329h1v1h-1zM581 329h1v1h-1zM583 329h1v1h-1zM586 329h1v1h-1zM588 329h1v1h-1zM591 329h1v1h-1zM593 329h1v1h-1zM596 329h1v1h-1zM601 329h1v1h-1zM571 330h2v1h-2zM576 330h1v1h-1zM579 330h2v1h-2zM584 330h2v1h-2zM589 330h2v1h-2zM594 330h2v1h-2zM598 330h3v1h-3zM570 390h3v1h-3zM579 390h2v1h-2zM584 390h2v1h-2zM569 391h2v1h-2zM572 391h2v1h-2zM578 391h1v1h-1zM581 391h1v1h-1zM583 391h1v1h-1zM586 391h1v1h-1zM569 392h2v1h-2zM572 392h2v1h-2zM578 392h1v1h-1zM581 392h1v1h-1zM583 392h1v1h-1zM586 392h1v1h-1zM569 393h2v1h-2zM572 393h2v1h-2zM578 393h1v1h-1zM581 393h1v1h-1zM583 393h1v1h-1zM586 393h1v1h-1zM567 394h1v1h-1zM569 394h2v1h-2zM572 394h2v1h-2zM578 394h1v1h-1zM581 394h1v1h-1zM583 394h1v1h-1zM586 394h1v1h-1zM569 395h2v1h-2zM572 395h2v1h-2zM576 395h1v1h-1zM578 395h1v1h-1zM581 395h1v1h-1zM583 395h1v1h-1zM586 395h1v1h-1zM570 396h3v1h-3zM576 396h1v1h-1zM579 396h2v1h-2zM584 396h2v1h-2zM574 426h2v1h-2zM582 426h2v1h-2zM587 426h2v1h-2zM591 426h3v1h-3zM599 426h1v1h-1zM604 426h1v1h-1zM573 427h1v1h-1zM576 427h1v1h-1zM581 427h1v1h-1zM584 427h1v1h-1zM586 427h1v1h-1zM589 427h1v1h-1zM594 427h1v1h-1zM598 427h2v1h-2zM603 427h2v1h-2zM573 428h1v1h-1zM576 428h1v1h-1zM581 428h1v1h-1zM584 428h1v1h-1zM586 428h1v1h-1zM589 428h1v1h-1zM594 428h1v1h-1zM597 428h1v1h-1zM599 428h1v1h-1zM602 428h1v1h-1zM604 428h1v1h-1zM573 429h1v1h-1zM576 429h1v1h-1zM581 429h1v1h-1zM584 429h1v1h-1zM586 429h1v1h-1zM589 429h1v1h-1zM592 429h2v1h-2zM596 429h1v1h-1zM599 429h1v1h-1zM601 429h1v1h-1zM604 429h1v1h-1zM570 430h2v1h-2zM573 430h1v1h-1zM576 430h1v1h-1zM581 430h1v1h-1zM584 430h1v1h-1zM586 430h1v1h-1zM589 430h1v1h-1zM594 430h1v1h-1zM596 430h10v1h-10zM573 431h1v1h-1zM576 431h1v1h-1zM579 431h1v1h-1zM581 431h1v1h-1zM584 431h1v1h-1zM586 431h1v1h-1zM589 431h1v1h-1zM594 431h1v1h-1zM599 431h1v1h-1zM604 431h1v1h-1zM574 432h2v1h-2zM579 432h1v1h-1zM582 432h2v1h-2zM587 432h2v1h-2zM591 432h3v1h-3zM599 432h1v1h-1zM604 432h1v1h-1zM567 435h1v1h-1zM567 440h1v1h-1zM571 442h2v1h-2zM579 442h2v1h-2zM585 442h1v1h-1zM590 442h1v1h-1zM594 442h2v1h-2zM570 443h1v1h-1zM573 443h1v1h-1zM578 443h1v1h-1zM581 443h1v1h-1zM584 443h2v1h-2zM589 443h2v1h-2zM593 443h1v1h-1zM596 443h1v1h-1zM570 444h1v1h-1zM573 444h1v1h-1zM578 444h1v1h-1zM581 444h1v1h-1zM585 444h1v1h-1zM590 444h1v1h-1zM593 444h1v1h-1zM596 444h1v1h-1zM570 445h1v1h-1zM573 445h1v1h-1zM578 445h1v1h-1zM581 445h1v1h-1zM585 445h1v1h-1zM590 445h1v1h-1zM594 445h3v1h-3zM570 446h1v1h-1zM573 446h1v1h-1zM578 446h1v1h-1zM581 446h1v1h-1zM585 446h1v1h-1zM590 446h1v1h-1zM596 446h1v1h-1zM570 447h1v1h-1zM573 447h1v1h-1zM576 447h1v1h-1zM578 447h1v1h-1zM581 447h1v1h-1zM585 447h1v1h-1zM590 447h1v1h-1zM596 447h1v1h-1zM571 448h2v1h-2zM576 448h1v1h-1zM579 448h2v1h-2zM584 448h3v1h-3zM589 448h3v1h-3zM594 448h2v1h-2zM570 497h3v1h-3zM579 497h2v1h-2zM584 497h2v1h-2zM569 498h2v1h-2zM572 498h2v1h-2zM578 498h1v1h-1zM581 498h1v1h-1zM583 498h1v1h-1zM586 498h1v1h-1zM569 499h2v1h-2zM572 499h2v1h-2zM578 499h1v1h-1zM581 499h1v1h-1zM583 499h1v1h-1zM586 499h1v1h-1zM569 500h2v1h-2zM572 500h2v1h-2zM578 500h1v1h-1zM581 500h1v1h-1zM583 500h1v1h-1zM586 500h1v1h-1zM567 501h1v1h-1zM569 501h2v1h-2zM572 501h2v1h-2zM578 501h1v1h-1zM581 501h1v1h-1zM583 501h1v1h-1zM586 501h1v1h-1zM569 502h2v1h-2zM572 502h2v1h-2zM576 502h1v1h-1zM578 502h1v1h-1zM581 502h1v1h-1zM583 502h1v1h-1zM586 502h1v1h-1zM570 503h3v1h-3zM576 503h1v1h-1zM579 503h2v1h-2zM584 503h2v1h-2zM574 535h2v1h-2zM582 535h2v1h-2zM587 535h2v1h-2zM592 535h2v1h-2zM596 535h4v1h-4zM601 535h3v1h-3zM573 536h1v1h-1zM576 536h1v1h-1zM581 536h1v1h-1zM584 536h1v1h-1zM586 536h1v1h-1zM589 536h1v1h-1zM591 536h1v1h-1zM594 536h1v1h-1zM596 536h1v1h-1zM604 536h1v1h-1zM573 537h1v1h-1zM576 537h1v1h-1zM581 537h1v1h-1zM584 537h1v1h-1zM586 537h1v1h-1zM589 537h1v1h-1zM591 537h1v1h-1zM594 537h1v1h-1zM596 537h1v1h-1zM604 537h1v1h-1zM573 538h1v1h-1zM576 538h1v1h-1zM581 538h1v1h-1zM584 538h1v1h-1zM586 538h1v1h-1zM589 538h1v1h-1zM592 538h2v1h-2zM596 538h3v1h-3zM603 538h1v1h-1zM570 539h2v1h-2zM573 539h1v1h-1zM576 539h1v1h-1zM581 539h1v1h-1zM584 539h1v1h-1zM586 539h1v1h-1zM589 539h1v1h-1zM591 539h1v1h-1zM594 539h1v1h-1zM599 539h1v1h-1zM602 539h1v1h-1zM573 540h1v1h-1zM576 540h1v1h-1zM579 540h1v1h-1zM581 540h1v1h-1zM584 540h1v1h-1zM586 540h1v1h-1zM589 540h1v1h-1zM591 540h1v1h-1zM594 540h1v1h-1zM599 540h1v1h-1zM601 540h1v1h-1zM574 541h2v1h-2zM579 541h1v1h-1zM582 541h2v1h-2zM587 541h2v1h-2zM592 541h2v1h-2zM596 541h3v1h-3zM601 541h4v1h-4zM567 544h1v1h-1zM567 549h1v1h-1zM571 551h2v1h-2zM575 551h4v1h-4zM583 551h4v1h-4zM591 551h1v1h-1zM593 551h4v1h-4zM599 551h2v1h-2zM570 552h1v1h-1zM573 552h1v1h-1zM578 552h1v1h-1zM586 552h1v1h-1zM590 552h2v1h-2zM596 552h1v1h-1zM598 552h1v1h-1zM601 552h1v1h-1zM570 553h1v1h-1zM573 553h1v1h-1zM577 553h1v1h-1zM585 553h1v1h-1zM589 553h1v1h-1zM591 553h1v1h-1zM595 553h1v1h-1zM598 553h1v1h-1zM601 553h1v1h-1zM571 554h2v1h-2zM577 554h1v1h-1zM585 554h1v1h-1zM588 554h1v1h-1zM591 554h1v1h-1zM595 554h1v1h-1zM599 554h2v1h-2zM570 555h1v1h-1zM573 555h1v1h-1zM576 555h1v1h-1zM584 555h1v1h-1zM588 555h5v1h-5zM594 555h1v1h-1zM598 555h1v1h-1zM601 555h1v1h-1zM570 556h1v1h-1zM573 556h1v1h-1zM576 556h1v1h-1zM581 556h1v1h-1zM584 556h1v1h-1zM591 556h1v1h-1zM594 556h1v1h-1zM598 556h1v1h-1zM601 556h1v1h-1zM571 557h2v1h-2zM575 557h1v1h-1zM581 557h1v1h-1zM583 557h1v1h-1zM591 557h1v1h-1zM593 557h1v1h-1zM599 557h2v1h-2zM572 679h1v1h-1zM576 679h2v1h-2zM586 679h1v1h-1zM588 679h3v1h-3zM596 679h1v1h-1zM598 679h3v1h-3zM571 680h2v1h-2zM575 680h1v1h-1zM585 680h2v1h-2zM591 680h1v1h-1zM595 680h2v1h-2zM601 680h1v1h-1zM572 681h1v1h-1zM575 681h1v1h-1zM584 681h1v1h-1zM586 681h1v1h-1zM591 681h1v1h-1zM594 681h1v1h-1zM596 681h1v1h-1zM601 681h1v1h-1zM572 682h1v1h-1zM575 682h3v1h-3zM583 682h1v1h-1zM586 682h1v1h-1zM590 682h1v1h-1zM593 682h1v1h-1zM596 682h1v1h-1zM600 682h1v1h-1zM572 683h1v1h-1zM575 683h1v1h-1zM578 683h1v1h-1zM583 683h5v1h-5zM589 683h1v1h-1zM593 683h5v1h-5zM599 683h1v1h-1zM572 684h1v1h-1zM575 684h1v1h-1zM578 684h1v1h-1zM581 684h1v1h-1zM586 684h1v1h-1zM588 684h1v1h-1zM596 684h1v1h-1zM598 684h1v1h-1zM571 685h3v1h-3zM576 685h2v1h-2zM581 685h1v1h-1zM586 685h1v1h-1zM588 685h4v1h-4zM596 685h1v1h-1zM598 685h4v1h-4zM567 688h1v1h-1zM567 693h1v1h-1zM572 695h1v1h-1zM576 695h2v1h-2zM581 695h2v1h-2zM571 696h2v1h-2zM575 696h1v1h-1zM578 696h1v1h-1zM580 696h1v1h-1zM583 696h1v1h-1zM572 697h1v1h-1zM575 697h1v1h-1zM578 697h1v1h-1zM580 697h1v1h-1zM583 697h1v1h-1zM572 698h1v1h-1zM575 698h1v1h-1zM578 698h1v1h-1zM580 698h1v1h-1zM583 698h1v1h-1zM572 699h1v1h-1zM575 699h1v1h-1zM578 699h1v1h-1zM580 699h1v1h-1zM583 699h1v1h-1zM572 700h1v1h-1zM575 700h1v1h-1zM578 700h1v1h-1zM580 700h1v1h-1zM583 700h1v1h-1zM571 701h3v1h-3zM576 701h2v1h-2zM581 701h2v1h-2zM569 757h4v1h-4zM575 757h2v1h-2zM569 758h1v1h-1zM574 758h1v1h-1zM577 758h1v1h-1zM569 759h1v1h-1zM574 759h1v1h-1zM577 759h1v1h-1zM569 760h3v1h-3zM574 760h1v1h-1zM577 760h1v1h-1zM572 761h1v1h-1zM574 761h1v1h-1zM577 761h1v1h-1zM572 762h1v1h-1zM574 762h1v1h-1zM577 762h1v1h-1zM569 763h3v1h-3zM575 763h2v1h-2zM571 821h2v1h-2zM570 822h1v1h-1zM573 822h1v1h-1zM570 823h1v1h-1zM573 823h1v1h-1zM570 824h1v1h-1zM573 824h1v1h-1zM570 825h1v1h-1zM573 825h1v1h-1zM570 826h1v1h-1zM573 826h1v1h-1zM571 827h2v1h-2z"/>
<rect x="569" y="111" width="34" height="11" fill="#fff"/>
<path fill="#000" d="M574 113h1v1h-1zM580 113h3v1h-3zM585 113h3v1h-3zM590 113h4v1h-4zM597 113h1v1h-1zM573 114h2v1h-2zM583 114h1v1h-1zM588 114h1v1h-1zM593 114h1v1h-1zM596 114h2v1h-2zM574 115h1v1h-1zM583 115h1v1h-1zM588 115h1v1h-1zM592 115h1v1h-1zM597 115h1v1h-1zM574 116h1v1h-1zM582 116h1v1h-1zM586 116h2v1h-2zM592 116h1v1h-1zM597 116h1v1h-1zM574 117h1v1h-1zM581 117h1v1h-1zM588 117h1v1h-1zM591 117h1v1h-1zM597 117h1v1h-1zM574 118h1v1h-1zM578 118h1v1h-1zM580 118h1v1h-1zM588 118h1v1h-1zM591 118h1v1h-1zM597 118h1v1h-1zM573 119h3v1h-3zM578 119h1v1h-1zM580 119h4v1h-4zM585 119h3v1h-3zM590 119h1v1h-1zM596 119h3v1h-3z"/>
<path fill="#fff" d="M9 8h1v1h-1zM9 9h2v1h-2zM9 10h3v1h-3zM9 11h4v1h-4zM9 12h5v1h-5zM9 13h6v1h-6zM9 14h7v1h-7zM9 15h8v1h-8zM9 16h9v1h-9zM9 17h6v1h-6zM9 18h3v1h-3zM13 18h2v1h-2zM9 19h2v1h-2zM13 19h2v1h-2zM9 20h1v1h-1zM14 20h2v1h-2zM14 21h2v1h-2zM15 22h2v1h-2zM15 23h2v1h-2zM16 24h2v1h-2zM16 25h2v1h-2z"/>
</svg></body></html>
